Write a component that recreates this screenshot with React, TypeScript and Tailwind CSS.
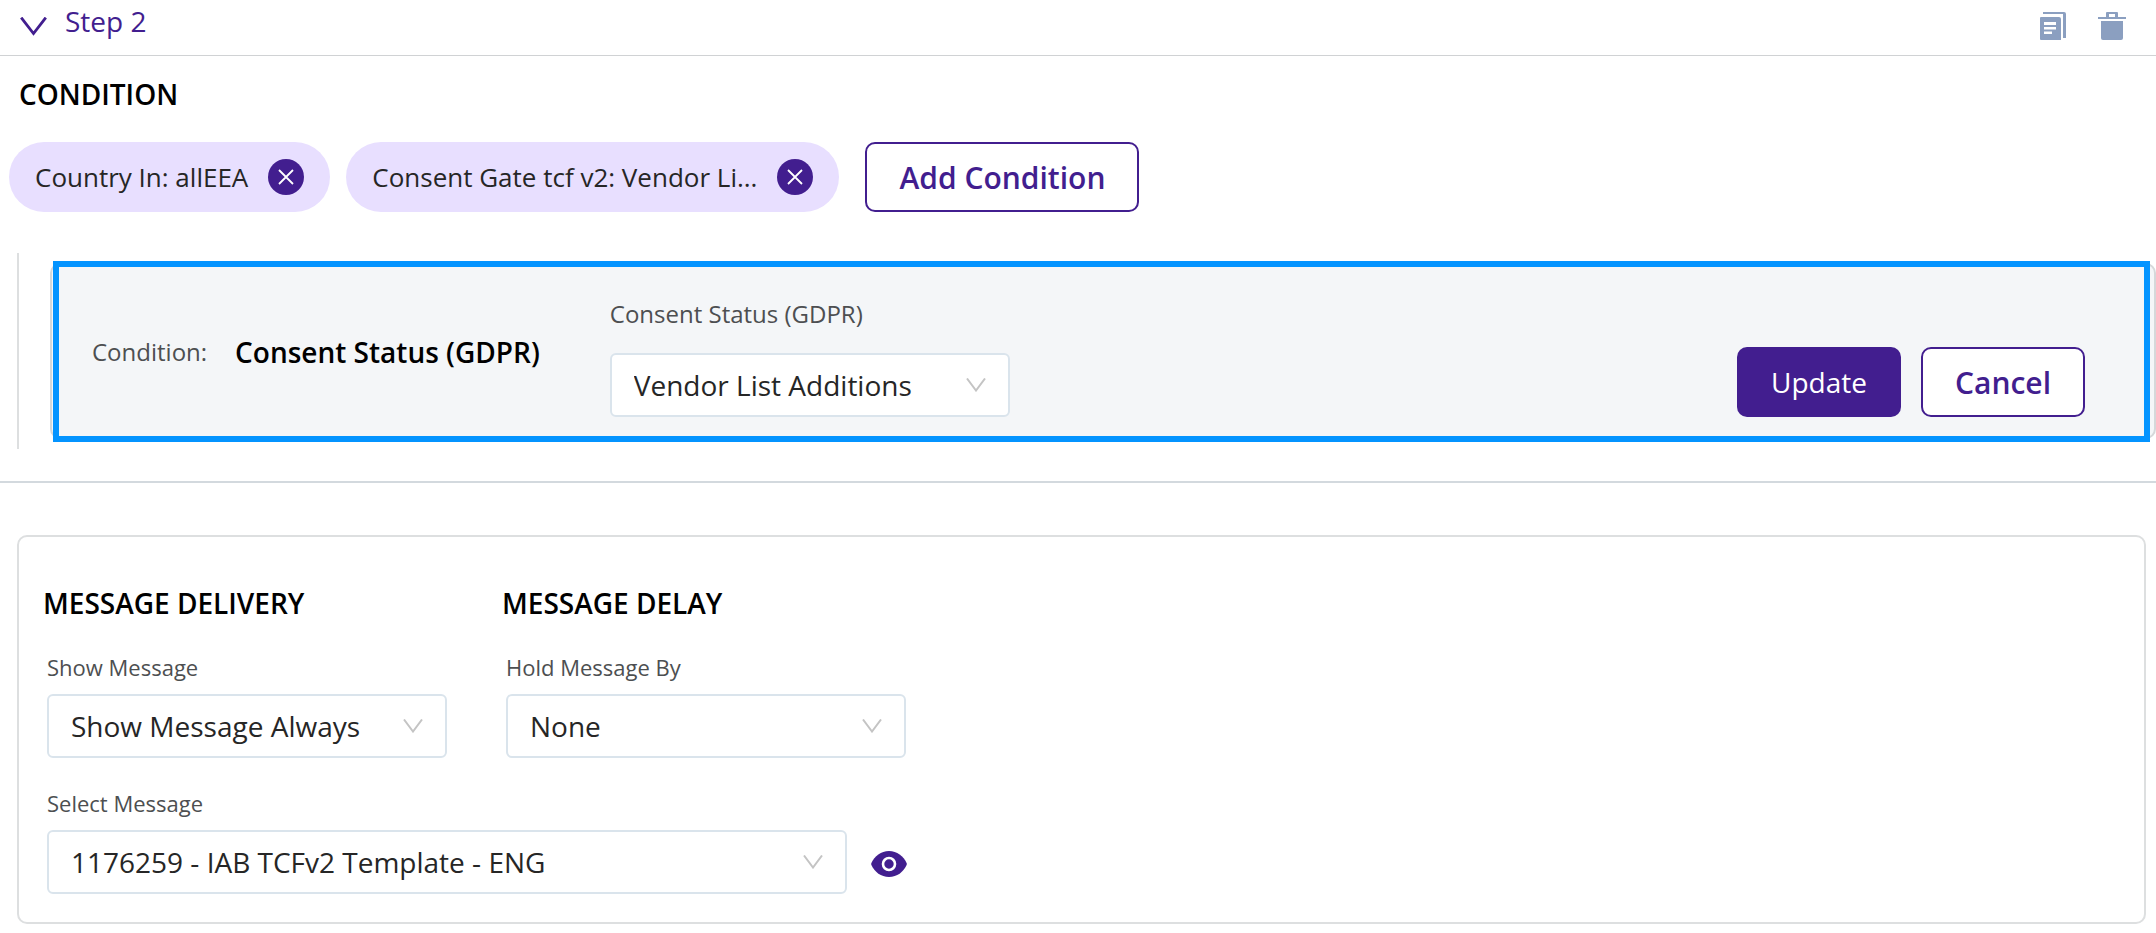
import { useId, useState } from "react";

interface SelectFieldProps {
  label: string;
  options: string[];
  className?: string;
  labelClassName?: string;
}

function SelectField({
  label,
  options,
  className = "w-[400px]",
  labelClassName = "mb-[11px] text-[22px] leading-8",
}: SelectFieldProps) {
  const id = useId();
  return (
    <div className={className}>
      <label htmlFor={id} className={`block text-[#4d4f51] ${labelClassName}`}>
        {label}
      </label>
      <div className="relative">
        <select
          id={id}
          className="block h-16 w-full appearance-none rounded-md border-2 border-[#dae4ec] bg-white pr-16 pl-[22px] text-[28px] text-[#262626]"
        >
          {options.map((o) => (
            <option key={o}>{o}</option>
          ))}
        </select>
        <svg
          className="pointer-events-none absolute top-[25px] right-6 h-[14px] w-5"
          viewBox="0 0 20 14"
          fill="none"
          stroke="#c4c4c4"
          strokeWidth="2"
        >
          <path d="M1 .5 10 12.5 19 .5" />
        </svg>
      </div>
    </div>
  );
}

function Chip({ label, onRemove }: { label: string; onRemove: () => void }) {
  return (
    <li className="flex h-[70px] items-center gap-5 rounded-full bg-[#e8dfff] px-[26px] text-[26px] text-[#262626]">
      {label}
      <button
        aria-label={`Remove ${label}`}
        onClick={onRemove}
        className="flex size-9 items-center justify-center rounded-full bg-[#421e8f]"
      >
        <svg className="size-4" viewBox="0 0 16 16" fill="none" stroke="#fff" strokeWidth="1.8">
          <path d="M1 1l14 14M15 1 1 15" />
        </svg>
      </button>
    </li>
  );
}

export default function App() {
  const [open, setOpen] = useState(true);
  const [conditions, setConditions] = useState(["Country In: allEEA", "Consent Gate tcf v2: Vendor Li..."]);

  return (
    <main className="bg-white font-['Open_Sans',sans-serif] text-black">
      {/* Step header */}
      <header className="flex items-start justify-between border-b border-[#d0d2d4] pt-[3px] pr-[30px] pb-[15px] pl-5">
        <button
          onClick={() => setOpen(!open)}
          className="flex items-center gap-[18px] text-[28px] leading-9 text-[#421e8f]"
        >
          <svg className="mt-2.5 h-[19px] w-[27px]" viewBox="0 0 27 19" fill="none" stroke="currentColor" strokeWidth="2.8">
            <path d="M1.2 .6 13.5 16.5 25.8 .6" />
          </svg>
          Step 2
        </button>
        <div className="flex gap-8 pt-[9px] text-[#8b9fc0]">
          <button aria-label="Duplicate step">
            <svg className="size-7" viewBox="-1 0 28 28" fill="currentColor">
              <path d="M4 0h21a2 2 0 0 1 2 2v24h-3V2H4z" />
              <path
                fillRule="evenodd"
                d="M2 5h18a2 2 0 0 1 2 2v21H2a1 1 0 0 1-1-1V6a1 1 0 0 1 1-1zm3 5v3h12v-3zm0 5v2.500h12V15zm0 4.500V22h8v-2.500z"
              />
            </svg>
          </button>
          <button aria-label="Delete step">
            <svg className="size-7" viewBox="0 0 28 28" fill="currentColor">
              <path fillRule="evenodd" d="M8 1a1 1 0 0 1 1-1h10a1 1 0 0 1 1 1v4h8v2H0V5h8zm3 1v3h6V2z" />
              <path d="M3 9h22v17a2 2 0 0 1-2 2H5a2 2 0 0 1-2-2z" />
            </svg>
          </button>
        </div>
      </header>

      {open && (
        <>
          {/* Conditions */}
          <section className="border-b-2 border-[#d3d9de] pt-[18px] pb-8">
            <h2 className="pl-[19px] text-[28px] leading-10 font-semibold">CONDITION</h2>
            <div className="mt-7 flex items-center gap-[26px] pl-[9px]">
              <ul className="flex gap-4">
                {conditions.map((c) => (
                  <Chip key={c} label={c} onRemove={() => setConditions(conditions.filter((x) => x !== c))} />
                ))}
              </ul>
              <button className="h-[70px] rounded-[10px] border-2 border-[#421e8f] bg-white px-8 text-[30px] font-semibold text-[#421e8f]">
                Add Condition
              </button>
            </div>

            <div className="mt-[41px] ml-[17px] border-l-2 border-[#dddfe0] py-2.5 pl-[31px]">
              <div className="relative flex items-center rounded-[10px] border-2 border-[#d5d8da] bg-[#f4f6f8] pt-[33px] pr-[69px] pb-5 pl-10">
                {/* Highlight frame over the editor */}
                <div className="pointer-events-none absolute -top-1 right-1 -bottom-[5px] left-px border-6 border-[#0494ff]" />
                <div className="flex items-center gap-7 pb-3">
                  <span className="text-2xl text-[#4d4f51]">Condition:</span>
                  <strong className="text-[28px] font-semibold">Consent Status (GDPR)</strong>
                </div>
                <SelectField
                  label="Consent Status (GDPR)"
                  options={["Vendor List Additions"]}
                  className="ml-[70px] w-[400px]"
                  labelClassName="mb-[23px] text-2xl"
                />
                <div className="ml-auto flex gap-5 self-end">
                  <button className="h-[70px] w-[164px] rounded-[10px] bg-[#421e8f] text-[28px] text-white">Update</button>
                  <button className="h-[70px] w-[164px] rounded-[10px] border-2 border-[#421e8f] bg-white text-[30px] font-semibold text-[#421e8f]">
                    Cancel
                  </button>
                </div>
              </div>
            </div>
          </section>

          {/* Message settings */}
          <section className="mt-[52px] mr-2.5 mb-2 ml-[17px] rounded-[10px] border-2 border-[#dddfe0] px-7 pt-[46px] pb-7">
            <div className="flex gap-[59px]">
              <div>
                <h2 className="-ml-1 text-[28px] leading-10 font-semibold">MESSAGE DELIVERY</h2>
                <div className="mt-7">
                  <SelectField label="Show Message" options={["Show Message Always"]} />
                </div>
              </div>
              <div>
                <h2 className="-ml-1 text-[28px] leading-10 font-semibold">MESSAGE DELAY</h2>
                <div className="mt-7">
                  <SelectField label="Hold Message By" options={["None"]} />
                </div>
              </div>
            </div>
            <div className="mt-[29px] flex items-end gap-6">
              <SelectField label="Select Message" options={["1176259 - IAB TCFv2 Template - ENG"]} className="w-[800px]" />
              <button aria-label="Preview message" className="flex h-16 items-center pt-1">
                <svg className="h-[26px] w-9" viewBox="0 0 36 26">
                  <path
                    d="M.4 12C3.500 5 10 0 18 0s14.500 5 17.600 12a2.500 2.500 0 0 1 0 2C32.500 21 26 26 18 26S3.500 21 .4 14a2.500 2.500 0 0 1 0-2z"
                    fill="#421e8f"
                  />
                  <circle cx="18" cy="13" r="6" fill="none" stroke="#fff" strokeWidth="2.600" />
                </svg>
              </button>
            </div>
          </section>
        </>
      )}
    </main>
  );
}
